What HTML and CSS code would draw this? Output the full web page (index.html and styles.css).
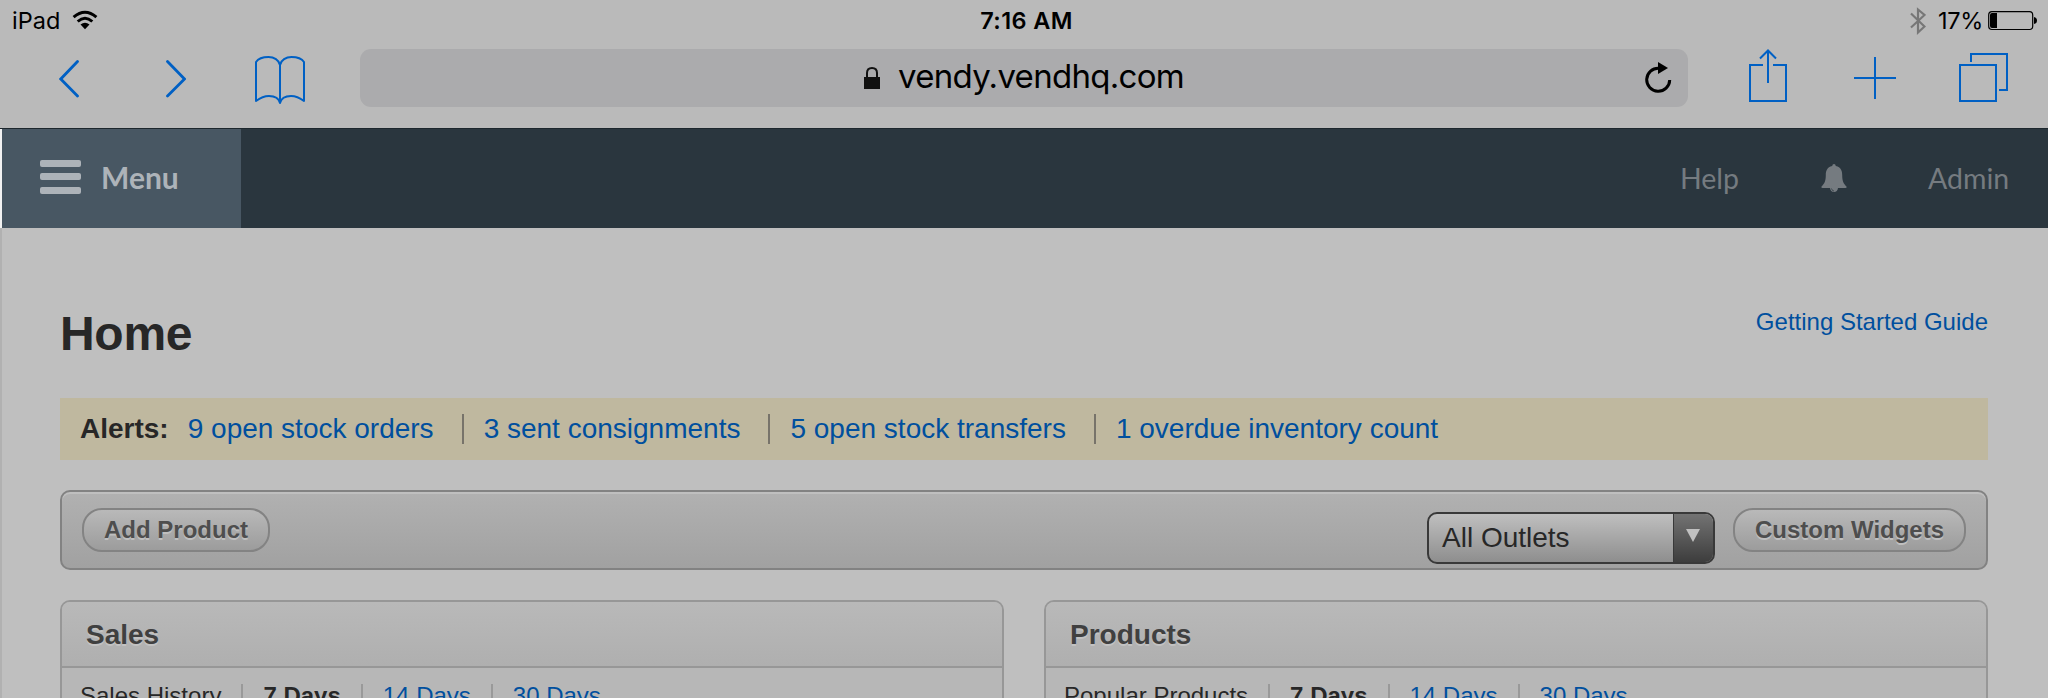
FILE: index.html
```html
<!DOCTYPE html>
<html lang="en">
<head>
<meta charset="utf-8">
<title>Home</title>
<link rel="stylesheet" href="styles.css">
</head>
<body>
<header class="browser">
  <div class="status">
    <div class="status-left">
      <span class="device">iPad</span>
      <svg class="wifi" width="26" height="20" viewBox="0 0 26 20"><g fill="none" stroke="#000" stroke-width="3"><path d="M1.6 7.2Q13-2.8 24.4 7.2"/><path d="M5.7 11.5Q13 5 20.3 11.5"/></g><path d="M8.5 14.5Q13 11 17.5 14.5L13 19.2Z"/></svg>
    </div>
    <div class="clock">7:16 AM</div>
    <div class="status-right">
      <svg class="bluetooth" width="16" height="28" viewBox="0 0 16 28"><path d="M1 6.5L14.5 19.5L8 25.5V2.5L14.5 8L1 20.5" fill="none" stroke="#777" stroke-width="2.2"/></svg>
      <span class="percent">17%</span>
      <svg class="battery" width="50" height="20" viewBox="0 0 50 20"><rect x=".7" y=".7" width="44" height="17.8" rx="3.2" fill="none" stroke="#000" stroke-width="1.2"/><path d="M4 2H9V17H4Q2 17 2 15V4Q2 2 4 2ZM46 6Q49 6.5 49 9.5T46 13Z"/></svg>
    </div>
  </div>
  <div class="controls">
    <svg class="back" width="22" height="38" viewBox="0 0 22 38"><path d="M18.500 1.500L1.800 19L18.500 36"/></svg>
    <svg class="forward" width="22" height="38" viewBox="0 0 22 38"><path d="M3.500 1.500L20.500 19L3.500 36"/></svg>
    <svg class="book" width="52" height="50" viewBox="0 0 52 50"><path d="M25 48V10C24 5 19 2 13.500 2C8 2 3 4 1 7V46C5 43 9 41 14 41C20 41 24 44 25 48C26 44 30 41 36 41C41 41 45 43 49 46V7C47 4 42 2 36.500 2C31 2 26 5 25 10" stroke-linejoin="round"/></svg>
    <div class="address">
      <svg class="lock" width="16" height="22" viewBox="0 0 16 22"><path d="M3 11V6Q3 1 8 1T13 6V11" fill="none" stroke="#111" stroke-width="2"/><path d="M0 10H16V22H0Z" fill="#111" stroke="none"/></svg>
      <span class="url">vendy.vendhq.com</span>
      <svg class="reload" width="28" height="32" viewBox="0 0 28 32"><path d="M14 6.300A11.500 11.500 0 1 0 24.700 18" fill="none" stroke="#000" stroke-width="3"/><path d="M13 0L23 6L13 12Z" fill="#000" stroke="none"/></svg>
    </div>
    <svg class="share" width="38" height="54" viewBox="0 0 38 54"><path d="M14 16H1V52H37V16H24M19 34V2M11 9.5L19 1.5L27 9.5"/></svg>
    <svg class="plus" width="42" height="42" viewBox="0 0 42 42"><path d="M0 21H42M21 0V42"/></svg>
    <svg class="tabs" width="50" height="50" viewBox="0 0 50 50"><path d="M1 12H37V48H1ZM12 9V1H48V37H40"/></svg>
  </div>
</header>
<nav class="nav">
  <a class="menu"><span class="bars"><i></i><i></i><i></i></span><span class="menu-text">Menu</span></a>
  <a class="help">Help</a>
  <svg class="bell" width="26" height="28" viewBox="0 0 26 28"><path d="M13 0Q14.600 0 14.800 2C20 3 21.200 7 21.200 11C21.200 17 22.500 19.500 25.500 22.500Q26 24 24.500 24H17Q16.500 28 13 28T9 24H1.500Q0 24 .5 22.500C3.500 19.500 4.800 17 4.800 11C4.800 7 6 3 11.200 2Q11.400 0 13 0Z" fill="#757b80"/><path d="M10.500 24.500Q11 27 13 27" fill="none" stroke="#2a363e" stroke-width=".7"/></svg>
  <a class="admin">Admin</a>
</nav>
<main class="page">
  <div class="heading"><h1>Home</h1><a class="guide">Getting Started Guide</a></div>
  <div class="alerts"><b>Alerts:</b><a>9 open stock orders</a><a>3 sent consignments</a><a>5 open stock transfers</a><a>1 overdue inventory count</a></div>
  <div class="toolbar">
    <button class="pill add">Add Product</button>
    <div class="select"><span>All Outlets</span><div class="arrow"><svg width="14" height="13" viewBox="0 0 14 13"><path d="M0 0H14L7 13Z" fill="#c0c0c0"/></svg></div></div>
    <button class="pill custom">Custom Widgets</button>
  </div>
  <div class="panels">
    <section class="panel"><h2>Sales</h2><div class="ranges"><span>Sales History</span><b>7 Days</b><a>14 Days</a><a>30 Days</a></div></section>
    <section class="panel"><h2>Products</h2><div class="ranges"><span>Popular Products</span><b>7 Days</b><a>14 Days</a><a>30 Days</a></div></section>
  </div>
</main>
</body>
</html>
```
FILE: styles.css
```css
* { box-sizing: border-box; }
html, body { height: 698px; overflow: hidden; }
body { margin: 0; background: #bfbfbf; color: #272727; font-family: "Liberation Sans", Arial, sans-serif; }
svg { display: block; flex: none; }

/* browser chrome */
.browser { height: 129px; background: #bababa; border-bottom: 1px solid #1d272d; font-family: Inter, sans-serif; color: #000; }
.status { display: grid; grid-template-columns: 1fr auto 1fr; height: 42px; font-size: 23.500px; line-height: 42px; }
.status-left, .status-right { display: flex; align-items: flex-start; }
.status-left { padding-left: 12px; }
.status-right { justify-content: flex-end; padding-right: 10px; }
.device { width: 60px; }
.wifi { margin-top: 10px; }
.clock { font-weight: 600; letter-spacing: .4px; padding-left: 5px; }
.bluetooth { margin: 7px 12px 0 0; }
.percent { width: 50px; letter-spacing: -.3px; }
.battery { margin-top: 11px; }
.controls { display: flex; align-items: flex-start; height: 86px; }
.controls svg { fill: none; stroke: #0060c4; stroke-width: 2; }
.controls .back, .controls .forward { stroke-width: 2.800; stroke-linecap: round; }
.back { margin: 18px 0 0 59px; }
.forward { margin: 18px 0 0 83px; }
.book { margin: 13px 0 0 69px; }
.address { display: flex; width: 1328px; height: 58px; margin: 7px 0 0 53px; border-radius: 11px; background: #ababad; }
.lock { margin: 18px 0 0 504px; }
.url { width: 747px; margin-left: 18px; font-size: 33px; line-height: 55px; letter-spacing: -.7px; white-space: nowrap; }
.reload { margin-top: 13px; }
.share { margin: 7px 0 0 61px; }
.plus { margin: 15px 0 0 67px; }
.tabs { margin: 11px 0 0 63px; }

/* application bar */
.nav { display: flex; height: 99px; background: #2a363e; border-left: 2px solid #f2f2f2; font: 28.500px/99px Lato, sans-serif; color: #757b80; }
.menu { display: flex; width: 239px; padding-left: 38px; background: #485763; font-size: 30px; line-height: 97px; font-weight: 700; }
.bars { display: flex; flex-direction: column; gap: 6.500px; width: 41px; padding-top: 30.500px; }
.bars i { height: 7px; border-radius: 2px; background: #adb3b9; }
.menu-text { margin-left: 20px; }
.help { margin-left: auto; width: 141px; }
.bell { margin-top: 35px; }
.admin { width: 120px; margin-left: 81px; }

/* page content */
.page { height: 470px; padding: 0 60px 0 58px; border-left: 2px solid #b1b1b1; }
.heading { display: flex; justify-content: space-between; height: 170px; }
h1 { margin: 0; padding-top: 78px; font-size: 48px; line-height: 55px; letter-spacing: -.3px; }
.guide { padding-top: 80px; font-size: 24px; line-height: 28px; }
a { color: #004f9e; }
.nav a { color: inherit; }
.nav .menu { color: #adb3b9; }
.alerts { display: flex; height: 62px; padding: 16px 20px; background: #bfb89f; font-size: 28px; line-height: 30px; white-space: nowrap; }
.alerts b { margin-right: 19px; }
.alerts a + a { margin-left: 28px; padding-left: 20px; border-left: 2px solid #77736a; }
.toolbar { display: flex; height: 80px; margin-top: 30px; padding: 16px 20px; border: 2px solid #828282; border-radius: 10px; background: linear-gradient(#b1b1b1, #a1a1a1); box-shadow: inset 0 2px #bfbfbf; }
.pill { height: 44px; padding: 0; border: 2px solid #838383; border-radius: 20px; background: linear-gradient(#b9b9b9, #9c9c9c); color: #4e4e4e; font: bold 24px/38px "Liberation Sans", Arial, sans-serif; text-shadow: 0 2px #bfbfbf; white-space: nowrap; }
.add { width: 188px; }
.custom { width: 233px; margin-left: 18px; }
.select { display: flex; justify-content: space-between; width: 288px; height: 52px; margin: 4px 0 0 auto; border: 2px solid #393939; border-radius: 10px; overflow: hidden; background: linear-gradient(#bfbfbf, #8e8e8e); font-size: 28px; line-height: 47px; }
.select span { padding-left: 13px; }
.arrow { width: 40px; padding: 15px 0 0 12px; border-left: 1px solid #393939; background: linear-gradient(#737373, #3d3d3d); }
.panels { display: grid; grid-template-columns: 1fr 1fr; gap: 40px; margin-top: 30px; }
.panel { height: 130px; border: 2px solid #979797; border-radius: 10px; background: #b7b7b7; overflow: hidden; }
h2 { height: 66px; margin: 0; padding-left: 24px; border-bottom: 2px solid #979797; background: linear-gradient(#b9b9b9, #afafaf); color: #404040; font-size: 28px; line-height: 65px; text-shadow: 0 2px #c2c2c2; }
.ranges { display: flex; padding: 16px 18px; font-size: 24px; line-height: 24px; white-space: nowrap; }
.ranges > * + * { margin-left: 20px; padding-left: 20px; border-left: 2px solid #999; }
```
